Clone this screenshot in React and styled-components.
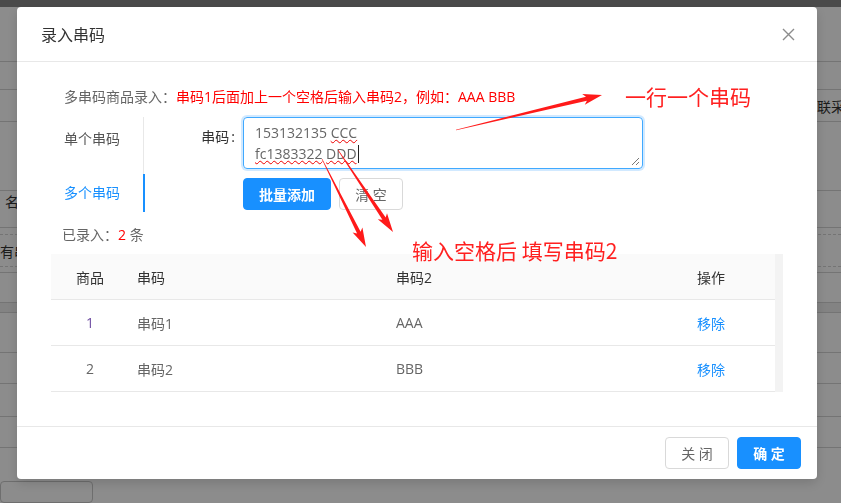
import React from "react";
import styled, { createGlobalStyle } from "styled-components";

const GlobalStyle = createGlobalStyle`
  html, body {
    margin: 0;
    padding: 0;
  }
  body {
    font-family: "Open Sans", "Noto Sans CJK SC", sans-serif;
    font-size: 14px;
    color: #666;
    background: #fff;
    overflow: hidden;
  }
  * {
    box-sizing: border-box;
  }
`;

/* ---------- page behind the dialog ---------- */

const Page = styled.div`
  width: 841px;
  height: 503px;
  display: flex;
  flex-direction: column;
  background: #fff;
`;

const TopBar = styled.div`
  flex: none;
  height: 7px;
  background: #888;
`;

const BgRow = styled.div`
  flex: none;
  height: ${(p) => p.$h}px;
  display: grid;
  grid-template-columns: 803px 1fr;
  align-items: ${(p) => (p.$top ? "start" : "center")};
  border-bottom: 1px ${(p) => (p.$dashed ? "dashed" : "solid")} #d4d4d4;
  background: ${(p) => (p.$fill ? "#efefef" : "#fff")};
  color: #333;
  font-size: 14px;
  white-space: nowrap;
  overflow: hidden;
`;

const BgCell = styled.div`
  padding-left: ${(p) => p.$pad || 0}px;
  padding-top: ${(p) => p.$padTop || 0}px;
  overflow: hidden;
`;

const BgBox = styled.div`
  margin-top: 33px;
  width: 93px;
  height: 40px;
  border: 1px solid #c8c8c8;
  border-radius: 4px;
`;

const bgRows = [
  { h: 55 },
  { h: 28 },
  { h: 32, right: "联采购" },
  { h: 69 },
  { h: 37, left: "名称", pad: 5, top: true, padTop: -2 },
  { h: 7, dashed: true },
  { h: 32, dashed: true, left: "有串码", pad: 0 },
  { h: 6 },
  { h: 30 },
  { h: 10, fill: true },
  { h: 40 },
  { h: 31 },
  { h: 33 },
  { h: 31 },
];

/* ---------- mask + dialog ---------- */

const Mask = styled.div`
  position: fixed;
  inset: 0;
  background: rgba(0, 0, 0, 0.45);
`;

const DialogWrap = styled.div`
  position: fixed;
  top: 7px;
  left: 17px;
  width: 800px;
`;

const Dialog = styled.div`
  background: #fff;
  border-radius: 4px;
  box-shadow: 0 4px 12px rgba(0, 0, 0, 0.15);
`;

const Header = styled.div`
  height: 55px;
  padding: 0 22px 0 24px;
  display: flex;
  align-items: center;
  justify-content: space-between;
  border-bottom: 1px solid #e8e8e8;
`;

const Title = styled.div`
  font-size: 16px;
  color: #333;
`;

const CloseBtn = styled.button`
  width: 14px;
  height: 14px;
  padding: 0;
  border: 0;
  background: none;
  display: flex;
  align-items: center;
  justify-content: center;
`;

const Body = styled.div`
  padding: 24px 24px 34px;
`;

const Hint = styled.div`
  margin-left: 23px;
  line-height: 22px;
  color: #666;
`;

const Red = styled.span`
  color: #f00;
`;

const TabsRow = styled.div`
  margin-top: 9px;
  display: flex;
  align-items: flex-start;
`;

const TabNav = styled.div`
  width: 103px;
  padding-top: 3px;
  border-right: 1px solid #e8e8e8;
  display: flex;
  flex-direction: column;
  gap: 16px;
`;

const Tab = styled.div`
  position: relative;
  padding: 8px 0 8px 23px;
  line-height: 22px;
  color: ${(p) => (p.$active ? "#1890ff" : "#555")};

  &::after {
    content: "";
    display: ${(p) => (p.$active ? "block" : "none")};
    position: absolute;
    top: 0;
    bottom: 0;
    right: -2px;
    width: 2px;
    background: #1890ff;
  }
`;

const TabPane = styled.div`
  padding-left: 24px;
  display: flex;
  flex-direction: column;
`;

const FormItem = styled.div`
  display: flex;
  align-items: flex-start;
`;

const Label = styled.label`
  width: 75px;
  line-height: 40px;
  text-align: right;
  color: #333;

  &::after {
    content: ":";
    margin: 0 8px 0 2px;
  }
`;

const TextBox = styled.div`
  position: relative;
  width: 400px;
  height: 52px;
  padding: 4px 11px;
  line-height: 21px;
  border: 1px solid #40a9ff;
  border-radius: 4px;
  box-shadow: 0 0 0 2px rgba(24, 144, 255, 0.2);
  color: #666;
  white-space: pre;
`;

const Misspelled = styled.span`
  text-decoration: underline wavy #e00;
  text-decoration-thickness: 1px;
  text-decoration-skip-ink: none;
`;

const Caret = styled.span`
  display: inline-block;
  width: 1px;
  height: 18px;
  margin-left: 1px;
  background: #222;
  vertical-align: -4px;
`;

const ResizeGrip = styled.svg`
  position: absolute;
  right: 2px;
  bottom: 2px;
`;

const BtnRow = styled.div`
  margin-left: 75px;
  margin-top: 9px;
  display: flex;
  gap: 8px;
`;

const Button = styled.button`
  height: 32px;
  padding: 0 15px;
  min-width: 64px;
  border-radius: 4px;
  font-family: inherit;
  font-size: 14px;
  border: 1px solid ${(p) => (p.$primary ? "#1890ff" : "#d9d9d9")};
  background: ${(p) => (p.$primary ? "#1890ff" : "#fff")};
  color: ${(p) => (p.$primary ? "#fff" : "#666")};
  font-weight: ${(p) => (p.$primary ? 600 : 400)};
`;

const Counter = styled.div`
  margin: 12px 0 0 21px;
  line-height: 22px;
  color: #666;
`;

const TableWrap = styled.div`
  margin: 8px 0 0 10px;
  width: 732px;
  display: flex;
`;

const TableMain = styled.div`
  flex: 1;
`;

const Gutter = styled.div`
  width: 8px;
  background: #f3f3f3;
`;

const TRow = styled.div`
  height: 46px;
  display: grid;
  grid-template-columns: 78px 259px 301px 1fr;
  align-items: center;
  border-bottom: 1px solid #e8e8e8;
  background: ${(p) => (p.$head ? "#fafafa" : "#fff")};
  color: ${(p) => (p.$head ? "#333" : "#666")};
`;

const Cell = styled.div`
  padding: 0 8px;
  text-align: ${(p) => (p.$center ? "center" : "left")};
  color: ${(p) => p.$color || "inherit"};
`;

const Link = styled.a`
  color: #1890ff;
  cursor: pointer;
`;

const Footer = styled.div`
  border-top: 1px solid #e8e8e8;
  padding: 10px 16px;
  display: flex;
  justify-content: flex-end;
  gap: 8px;
`;

/* ---------- red annotations drawn over the screenshot ---------- */

const Notes = styled.div`
  position: fixed;
  inset: 0;
  pointer-events: none;
`;

const NoteText = styled.div`
  position: absolute;
  left: ${(p) => p.$x}px;
  top: ${(p) => p.$y}px;
  font-family: "Noto Sans CJK SC", sans-serif;
  font-size: 21px;
  line-height: 21px;
  color: #ff2020;
  white-space: pre;
`;

function arrow(x1, y1, x2, y2) {
  const headLen = 16;
  const headW = 11;
  const shaft = 4;
  const L = Math.hypot(x2 - x1, y2 - y1);
  const ux = (x2 - x1) / L;
  const uy = (y2 - y1) / L;
  const nx = -uy;
  const ny = ux;
  const bx = x2 - ux * headLen;
  const by = y2 - uy * headLen;
  const pts = [
    [x1 + nx * 0.3, y1 + ny * 0.3],
    [bx + nx * (shaft / 2), by + ny * (shaft / 2)],
    [bx - ux * 3 + nx * (headW / 2), by - uy * 3 + ny * (headW / 2)],
    [x2, y2],
    [bx - ux * 3 - nx * (headW / 2), by - uy * 3 - ny * (headW / 2)],
    [bx - nx * (shaft / 2), by - ny * (shaft / 2)],
    [x1 - nx * 0.3, y1 - ny * 0.3],
  ];
  return pts.map((p) => p.map((v) => v.toFixed(1)).join(",")).join(" ");
}

const arrows = [
  [456, 130, 602, 95],
  [322, 159, 366, 247],
  [338, 150, 393, 232],
];

const rows = [
  { no: "1", noColor: "#6f4ea3", code: "串码1", code2: "AAA" },
  { no: "2", code: "串码2", code2: "BBB" },
];

export default function App() {
  return (
    <>
      <GlobalStyle />
      <Page>
        <TopBar />
        {bgRows.map((r, i) => (
          <BgRow key={i} $h={r.h} $dashed={r.dashed} $fill={r.fill} $top={r.top}>
            <BgCell $pad={r.pad} $padTop={r.padTop}>
              {r.left}
            </BgCell>
            <BgCell $pad={14}>{r.right}</BgCell>
          </BgRow>
        ))}
        <BgBox />
      </Page>
      <Mask />
      <DialogWrap>
        <Dialog>
          <Header>
            <Title>录入串码</Title>
            <CloseBtn aria-label="close">
              <svg width="13" height="13" viewBox="0 0 13 13">
                <path d="M1 1 L12 12 M12 1 L1 12" stroke="#8c8c8c" strokeWidth="1.4" />
              </svg>
            </CloseBtn>
          </Header>
          <Body>
            <Hint>
              多串码商品录入：<Red>串码1后面加上一个空格后输入串码2，例如：AAA BBB</Red>
            </Hint>
            <TabsRow>
              <TabNav>
                <Tab>单个串码</Tab>
                <Tab $active>多个串码</Tab>
              </TabNav>
              <TabPane>
                <FormItem>
                  <Label>串码</Label>
                  <TextBox role="textbox">
                    {"153132135 "}
                    <Misspelled>CCC</Misspelled>
                    {"\n"}
                    <Misspelled>fc1383322</Misspelled> <Misspelled>DDD</Misspelled>
                    <Caret />
                    <ResizeGrip width="9" height="9" viewBox="0 0 9 9">
                      <path d="M8 1 L1 8 M8 5 L5 8" stroke="#777" strokeWidth="1" />
                    </ResizeGrip>
                  </TextBox>
                </FormItem>
                <BtnRow>
                  <Button $primary>批量添加</Button>
                  <Button>清 空</Button>
                </BtnRow>
              </TabPane>
            </TabsRow>
            <Counter>
              已录入：<Red>2</Red> 条
            </Counter>
            <TableWrap>
              <TableMain>
                <TRow $head>
                  <Cell $center>商品</Cell>
                  <Cell>串码</Cell>
                  <Cell>串码2</Cell>
                  <Cell>操作</Cell>
                </TRow>
                {rows.map((r) => (
                  <TRow key={r.no}>
                    <Cell $center $color={r.noColor}>
                      {r.no}
                    </Cell>
                    <Cell>{r.code}</Cell>
                    <Cell>{r.code2}</Cell>
                    <Cell>
                      <Link>移除</Link>
                    </Cell>
                  </TRow>
                ))}
              </TableMain>
              <Gutter />
            </TableWrap>
          </Body>
          <Footer>
            <Button>关 闭</Button>
            <Button $primary>确 定</Button>
          </Footer>
        </Dialog>
      </DialogWrap>
      <Notes>
        <svg width="841" height="503">
          {arrows.map((a, i) => (
            <polygon key={i} points={arrow(...a)} fill="#ff1a1a" />
          ))}
        </svg>
        <NoteText $x={625} $y={86}>一行一个串码</NoteText>
        <NoteText $x={412} $y={240}>输入空格后 填写串码2</NoteText>
      </Notes>
    </>
  );
}
